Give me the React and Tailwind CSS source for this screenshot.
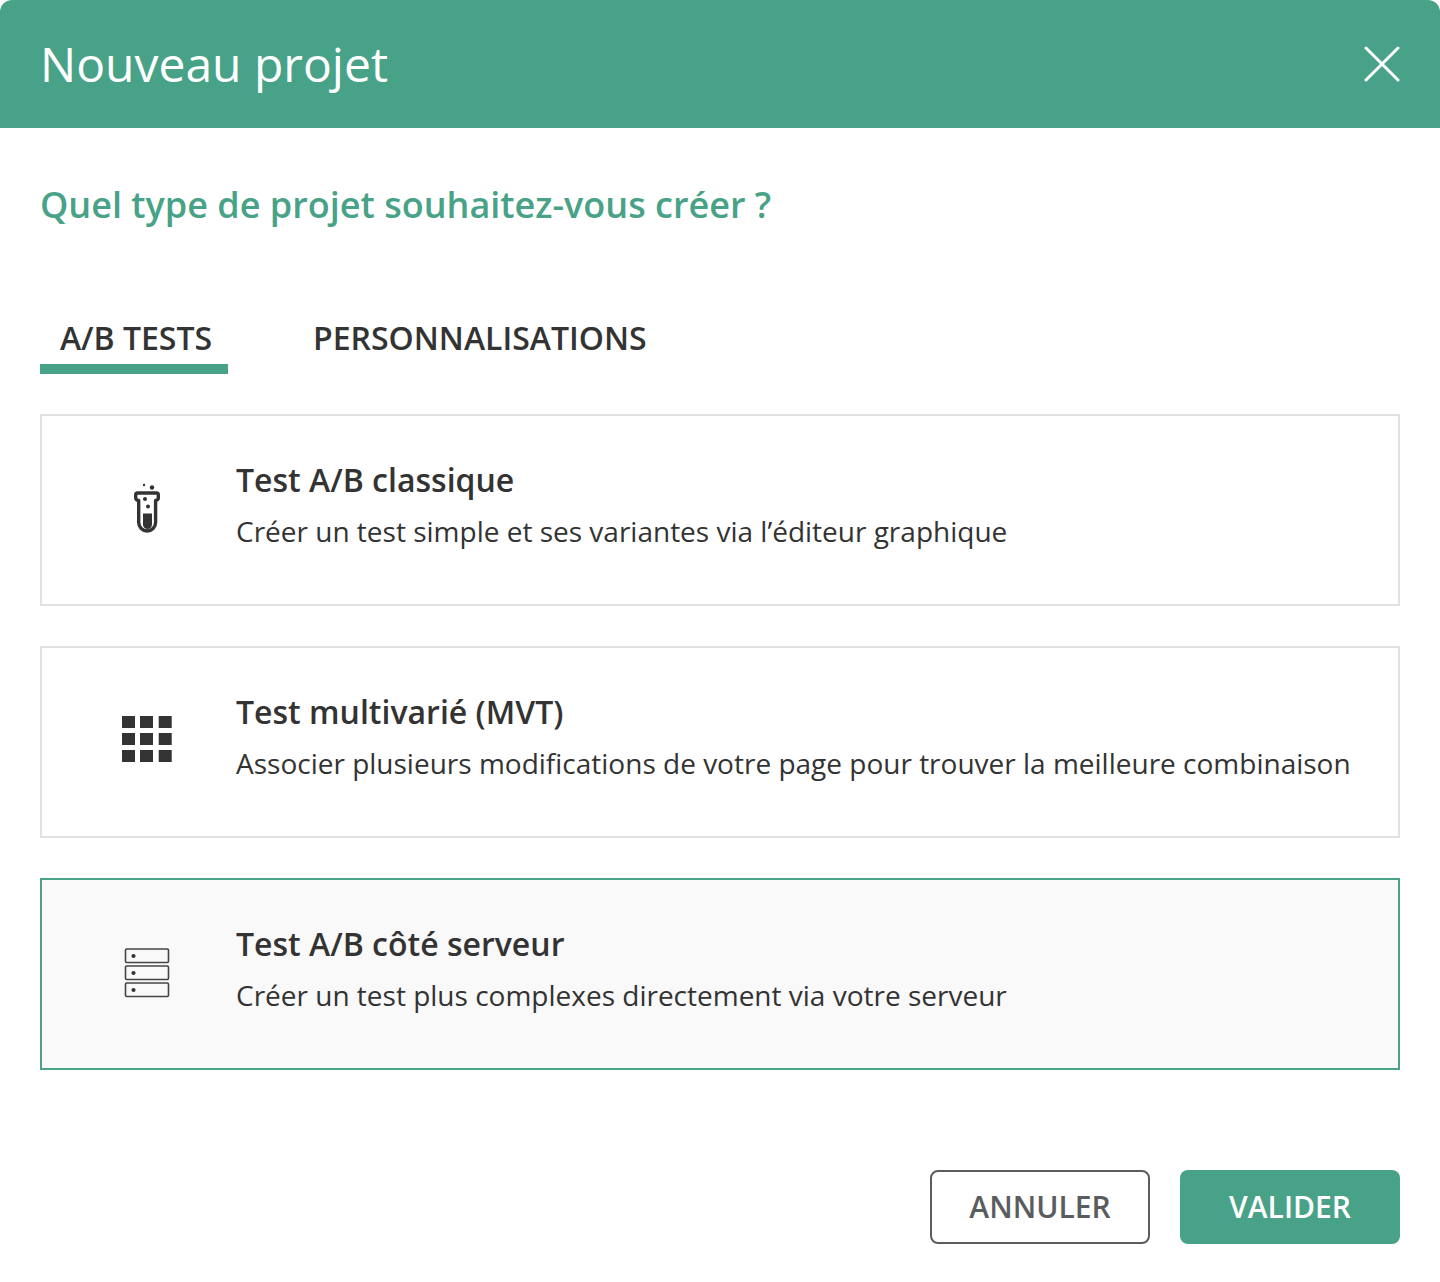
const GREEN = "bg-[#48a287]";

function Flask() {
  return (
    <svg width="100" height="100" viewBox="0 0 100 100" className="block">
      <path d="M37.5 33 H56.5 Q58.3 33 58.3 35 V38 Q58.3 40 55.6 40.5 V62.5 A8.45 8.45 0 0 1 38.7 62.5 V40.5 Q35.7 40 35.7 38 V35 Q35.7 33 37.5 33 Z" fill="none" stroke="#333" strokeWidth="3.4" strokeLinejoin="round" />
      <path d="M43 53.5 H52 V64.5 A4.5 4.5 0 0 1 43 64.5 Z" fill="#333" />
      <circle cx="45" cy="39" r="2" fill="#333" />
      <circle cx="48" cy="46.5" r="2" fill="#333" />
      <circle cx="52" cy="27.5" r="2.2" fill="#333" />
      <circle cx="44" cy="25" r="1.2" fill="#333" />
    </svg>
  );
}

function Grid() {
  const xs = [22, 40, 58.7];
  const ys = [24, 41, 58];
  return (
    <svg width="100" height="100" viewBox="0 0 100 100" className="block">
      {ys.map((y) => xs.map((x) => <rect key={`${x}-${y}`} x={x} y={y} width="13" height="12" fill="#333" />))}
    </svg>
  );
}

function Server() {
  return (
    <svg width="100" height="100" viewBox="0 0 100 100" className="block">
      {[25, 42, 59].map((y) => (
        <g key={y}>
          <rect x="25.5" y={y} width="43" height="13.5" rx="1.2" fill="none" stroke="#444" strokeWidth="1.6" />
          <circle cx="33.5" cy={y + 7} r="2.1" fill="#333" />
        </g>
      ))}
    </svg>
  );
}

function Card({ icon, title, desc, active }) {
  return (
    <div className={`flex h-[192px] border-2 ${active ? "border-[#48a287] bg-[#f9f9f9]" : "border-[#e2e2e2] bg-white"}`}>
      <div className="w-[194px] shrink-0 flex items-center justify-center pl-[40px] pr-[18px]">{icon}</div>
      <div className="pt-[42px]">
        <div className="text-[32px] leading-[44px] font-semibold text-[#333]">{title}</div>
        <div className="mt-[10px] text-[28px] leading-[38px] text-[#333] whitespace-nowrap">{desc}</div>
      </div>
    </div>
  );
}

export default function App() {
  return (
    <div className="w-[1440px] h-[1282px] bg-white rounded-[12px] overflow-hidden font-['Open_Sans',sans-serif]">
      <header className={`h-[128px] ${GREEN} flex items-center justify-between pl-[40px] pr-[40px]`}>
        <h1 className="text-[48px] leading-[64px] text-white">Nouveau projet</h1>
        <svg width="36" height="36" viewBox="0 0 36 36" className="block">
          <path d="M2 2 L34 34 M34 2 L2 34" stroke="#fff" strokeWidth="3" strokeLinecap="round" />
        </svg>
      </header>
      <main className="px-[40px]">
        <h2 className="mt-[52px] text-[36px] leading-[50px] font-semibold text-[#48a287]">Quel type de projet souhaitez-vous créer ?</h2>
        <nav className="mt-[90px] flex h-[54px] text-[32px] font-semibold text-[#333]">
          <div className="w-[188px] text-center border-b-[10px] border-[#48a287] leading-[36px] pl-[4px]">A/B TESTS</div>
          <div className="ml-[85px] leading-[36px]">PERSONNALISATIONS</div>
        </nav>
        <div className="mt-[40px] flex flex-col gap-[40px]">
          <Card icon={<Flask />} title="Test A/B classique" desc="Créer un test simple et ses variantes via l’éditeur graphique" />
          <Card icon={<Grid />} title="Test multivarié (MVT)" desc="Associer plusieurs modifications de votre page pour trouver la meilleure combinaison" />
          <Card active icon={<Server />} title="Test A/B côté serveur" desc="Créer un test plus complexes directement via votre serveur" />
        </div>
        <div className="mt-[100px] flex justify-end gap-[30px]">
          <button className="w-[220px] h-[74px] rounded-[8px] border-2 border-[#5a5d60] bg-white text-[30px] leading-[70px] font-semibold text-[#5a5d60]">ANNULER</button>
          <button className={`w-[220px] h-[74px] rounded-[8px] ${GREEN} text-[30px] font-semibold text-white pb-[2px]`}>VALIDER</button>
        </div>
      </main>
    </div>
  );
}
